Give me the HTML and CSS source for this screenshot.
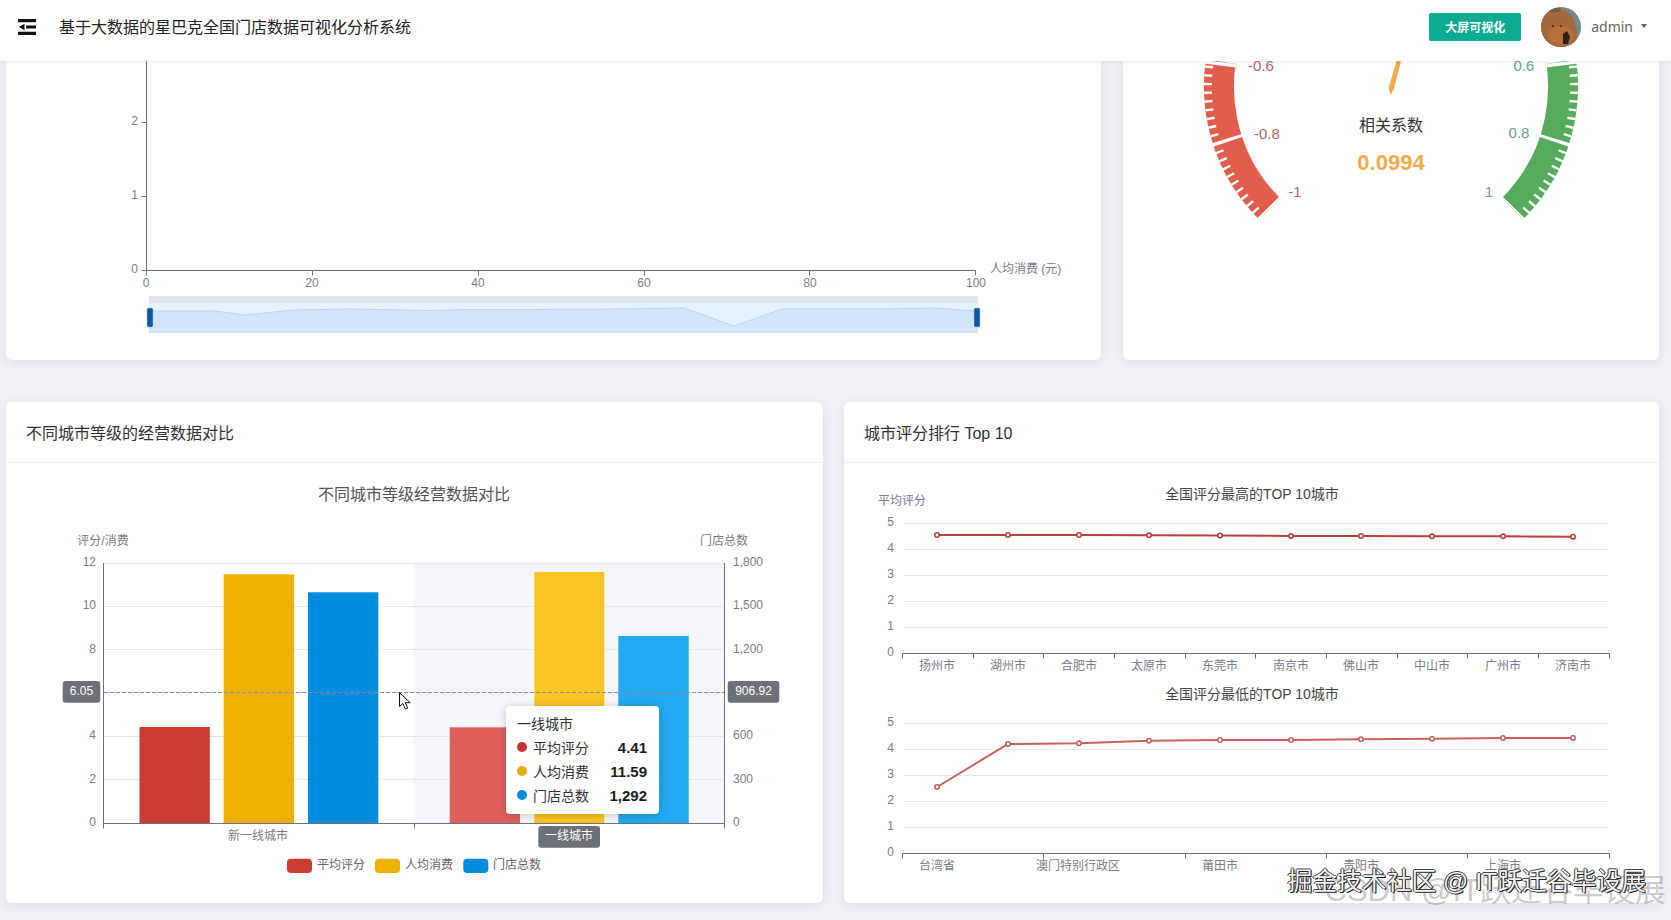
FILE: index.html
```html
<!DOCTYPE html>
<html lang="zh-CN">
<head>
<meta charset="utf-8">
<title>基于大数据的星巴克全国门店数据可视化分析系统</title>
<link rel="stylesheet" href="styles.css">
</head>
<body>
<header class="topbar">
  <svg class="fold" viewBox="0 0 18 16" width="18" height="16"><path d="M0 0h18v3.2H0zM8 6.4h10v3.2H8zM0 12.8h18V16H0zM1 8l5.5-3.2v6.4z"/></svg>
  <h1 class="app-title">基于大数据的星巴克全国门店数据可视化分析系统</h1>
  <div class="topbar-right">
    <a class="screen-btn">大屏可视化</a>
    <svg class="avatar" viewBox="0 0 40 40" width="40" height="40">
      <defs><clipPath id="av"><circle cx="20" cy="20" r="20"/></clipPath></defs>
      <g clip-path="url(#av)">
        <rect width="40" height="40" fill="#76878f"/>
        <path d="M0 40V17C2 7 9 2 17 2c8 0 15 6 17 15l2 8v15z" fill="#a4683c"/>
        <path d="M8 4c3-3 8-4 12-3l-2 4C13 5 10 6 8 4z" fill="#7a5a44"/>
        <ellipse cx="20" cy="28" rx="13" ry="9" fill="#b5703c"/>
        <path d="M22 27l4-3 3 6-2 7h-5z" fill="#2a211c"/>
        <circle cx="12" cy="19" r="1" fill="#3a2618"/><circle cx="20" cy="19" r="1" fill="#3a2618"/>
      </g>
    </svg>
    <span class="user-name">admin</span>
    <i class="caret"></i>
  </div>
</header>

<main class="page">
  <section class="row row-top">
    <div class="card">
      <svg class="fill" viewBox="6 61 1095 299">
        <path class="axis" d="M146.5 61V270.5H976M141.5 122.5h5M141.5 196.5h5M141.5 270.5h5M146.5 270.5v5M312.5 270.5v5M478.5 270.5v5M644.5 270.5v5M809.5 270.5v5M975.5 270.5v5"/>
        <g class="ax end">
          <text x="138" y="121">2</text><text x="138" y="195">1</text><text x="138" y="269">0</text>
        </g>
        <g class="ax mid">
          <text x="146" y="283">0</text><text x="312" y="283">20</text><text x="478" y="283">40</text><text x="644" y="283">60</text><text x="810" y="283">80</text><text x="976" y="283">100</text>
        </g>
        <text class="ax" x="990" y="269">人均消费 (元)</text>
        <rect x="149" y="296" width="829" height="37" fill="#d2e6fa"/>
        <rect x="149" y="296" width="829" height="7" fill="#e0e4ec"/>
        <path fill="#e4f3fe" d="M149 303H978V311L975 311 935 308 880 309 782 309 734 326 684 308 620 309 530 309.5 470 309.5 430 310.5 350 309 293 310 246 315 214 311 149 311Z"/>
        <path fill="none" stroke="#bcd4f0" d="M149 311L214 311 246 315 293 310 350 309 430 310.5 470 309.5 530 309.5 620 309 684 308 734 326 782 309 880 309 935 308 975 311"/>
        <rect class="zh" x="147" y="308" width="6" height="19" rx="1.5"/>
        <rect class="zh" x="974" y="308" width="6" height="19" rx="1.5"/>
      </svg>
    </div>
    <div class="card">
      <svg class="fill" viewBox="1123 61 536 299">
        <path class="arc red" d="M1269.4 208.6A172 172 0 0 1 1232.1 21.2"/>
        <path class="arc green" d="M1512.6 208.6A172 172 0 0 0 1549.9 21.2"/>
        <path class="minor" pathLength="25" d="M1261.6 216.4A183 183 0 0 1 1221.9 16.9"/>
        <path class="minor" pathLength="25" d="M1520.4 216.4A183 183 0 0 0 1560.1 16.9"/>
        <path class="major" pathLength="2.5" d="M1269.4 208.6A172 172 0 0 1 1232.1 21.2"/>
        <path class="major" pathLength="2.5" d="M1512.6 208.6A172 172 0 0 0 1549.9 21.2"/>
        <path class="cap" d="M1202 61.5L1238 66M1580 61.5L1544 66"/>
        <polygon fill="#f0ad4e" points="1396.5,61 1401,61 1394,89 1390.6,95 1388.5,88"/>
        <g class="gl gl-r">
          <text x="1295" y="191">-1</text><text x="1267" y="133">-0.8</text><text x="1261" y="65">-0.6</text>
        </g>
        <g class="gl gl-g">
          <text x="1489" y="191">1</text><text x="1519" y="132">0.8</text><text x="1524" y="65">0.6</text>
        </g>
        <text class="g-name" x="1391" y="125">相关系数</text>
        <text class="g-val" x="1391" y="162">0.0994</text>
      </svg>
    </div>
  </section>

  <section class="row row-bottom">
    <div class="card card-col">
      <div class="card-head">不同城市等级的经营数据对比</div>
      <div class="card-body">
        <svg class="fill" viewBox="6 463 817 440">
          <text class="c-title" x="414" y="494">不同城市等级经营数据对比</text>
          <rect x="414" y="563" width="310" height="260" fill="#f5f7fb"/>
          <path class="split" d="M104 563.5H724M104 606.5H724M104 649.5H724M104 692.5H724M104 736.5H724M104 779.5H724"/>
          <rect x="139.5" y="727" width="70.3" height="96" fill="#cb3c32"/>
          <rect x="223.7" y="574.3" width="70.3" height="248.7" fill="#ebb000"/>
          <rect x="308" y="592.3" width="70.3" height="230.7" fill="#008bdc"/>
          <rect x="449.7" y="727.3" width="70.3" height="95.7" fill="#df605b"/>
          <rect x="534.3" y="572" width="70" height="251" fill="#fcc425"/>
          <rect x="618.3" y="636" width="70.4" height="187" fill="#22a9f1"/>
          <path class="axis" d="M103.5 563V823.5H724.5V563M103.5 823.5v5M414.5 823.5v5M724.5 823.5v5"/>
          <path class="cross" d="M104 692.5H724"/>
          <g class="ax mid">
            <text x="103" y="541">评分/消费</text><text x="724" y="541">门店总数</text>
            <text x="258" y="836">新一线城市</text>
          </g>
          <g class="ax end">
            <text x="96" y="562">12</text><text x="96" y="605">10</text><text x="96" y="649">8</text><text x="96" y="735">4</text><text x="96" y="779">2</text><text x="96" y="822">0</text>
          </g>
          <g class="ax">
            <text x="733" y="562">1,800</text><text x="733" y="605">1,500</text><text x="733" y="649">1,200</text><text x="733" y="735">600</text><text x="733" y="779">300</text><text x="733" y="822">0</text>
          </g>
          <rect class="pl" x="62.7" y="681" width="37.6" height="21.7" rx="3"/>
          <rect class="pl" x="727.7" y="681" width="51.6" height="21.7" rx="3"/>
          <rect class="pl" x="538.3" y="826" width="61.7" height="21.7" rx="3"/>
          <g class="pl-t">
            <text x="81.5" y="691">6.05</text><text x="753.5" y="691">906.92</text><text x="569" y="835.5">一线城市</text>
          </g>
          <rect x="287" y="858.7" width="25" height="14.3" rx="4" fill="#cb3c32"/>
          <rect x="375" y="858.7" width="25" height="14.3" rx="4" fill="#ebb000"/>
          <rect x="463.3" y="858.7" width="25" height="14.3" rx="4" fill="#008bdc"/>
          <g class="ax lg">
            <text x="317" y="865">平均评分</text><text x="405" y="865">人均消费</text><text x="493" y="865">门店总数</text>
          </g>
          <path d="M399.5 692.5v14l3.4-3 2.4 5.6 2.4-1-2.4-5.4h4.8z" fill="#fff" stroke="#111" stroke-width="1"/>
        </svg>
        <div class="tip">
          <div class="tip-title">一线城市</div>
          <div class="tip-row"><i class="dot dot-r"></i><span>平均评分</span><b>4.41</b></div>
          <div class="tip-row"><i class="dot dot-y"></i><span>人均消费</span><b>11.59</b></div>
          <div class="tip-row"><i class="dot dot-b"></i><span>门店总数</span><b>1,292</b></div>
        </div>
      </div>
    </div>
    <div class="card card-col">
      <div class="card-head">城市评分排行 Top 10</div>
      <div class="card-body">
        <svg class="fill" viewBox="844 463 815 440">
          <text class="s-title" x="1252" y="494">全国评分最高的TOP 10城市</text>
          <text class="ax mid" x="902" y="501">平均评分</text>
          <path class="split" d="M903 523.5H1608M903 549.5H1608M903 575.5H1608M903 601.5H1608M903 627.5H1608"/>
          <path class="axis" d="M902.5 653.5H1609.5M902.5 653.5v5M973.5 653.5v5M1043.5 653.5v5M1114.5 653.5v5M1185.5 653.5v5M1255.5 653.5v5M1326.5 653.5v5M1397.5 653.5v5M1467.5 653.5v5M1538.5 653.5v5M1609.5 653.5v5"/>
          <g class="ax end">
            <text x="894" y="522">5</text><text x="894" y="548">4</text><text x="894" y="574">3</text><text x="894" y="600">2</text><text x="894" y="626">1</text><text x="894" y="652">0</text>
          </g>
          <g class="ax mid">
            <text x="937" y="666">扬州市</text><text x="1008" y="666">湖州市</text><text x="1079" y="666">合肥市</text><text x="1149" y="666">太原市</text><text x="1220" y="666">东莞市</text><text x="1291" y="666">南京市</text><text x="1361" y="666">佛山市</text><text x="1432" y="666">中山市</text><text x="1503" y="666">广州市</text><text x="1573" y="666">济南市</text>
          </g>
          <polyline class="ln ln-1" points="937,535 1008,535 1079,535 1149,535.3 1220,535.5 1291,536 1361,536 1432,536.3 1503,536.3 1573,536.7"/>
          <g class="pt pt-1">
            <circle cx="937" cy="535" r="2.2"/><circle cx="1008" cy="535" r="2.2"/><circle cx="1079" cy="535" r="2.2"/><circle cx="1149" cy="535.3" r="2.2"/><circle cx="1220" cy="535.5" r="2.2"/><circle cx="1291" cy="536" r="2.2"/><circle cx="1361" cy="536" r="2.2"/><circle cx="1432" cy="536.3" r="2.2"/><circle cx="1503" cy="536.3" r="2.2"/><circle cx="1573" cy="536.7" r="2.2"/>
          </g>

          <text class="s-title" x="1252" y="694">全国评分最低的TOP 10城市</text>
          <path class="split" d="M903 723.5H1608M903 749.5H1608M903 775.5H1608M903 801.5H1608M903 827.5H1608"/>
          <path class="axis" d="M902.5 853.5H1609.5M902.5 853.5v5M1043.5 853.5v5M1185.5 853.5v5M1326.5 853.5v5M1467.5 853.5v5M1609.5 853.5v5"/>
          <g class="ax end">
            <text x="894" y="722">5</text><text x="894" y="748">4</text><text x="894" y="774">3</text><text x="894" y="800">2</text><text x="894" y="826">1</text><text x="894" y="852">0</text>
          </g>
          <g class="ax mid">
            <text x="937" y="866">台湾省</text><text x="1078" y="866">澳门特别行政区</text><text x="1220" y="866">莆田市</text><text x="1361" y="866">贵阳市</text><text x="1503" y="866">上海市</text>
          </g>
          <polyline class="ln ln-2" points="937,787 1008,744 1079,743.3 1149,740.7 1220,740 1291,740 1361,739.3 1432,738.7 1503,738 1573,738"/>
          <g class="pt pt-2">
            <circle cx="937" cy="787" r="2.2"/><circle cx="1008" cy="744" r="2.2"/><circle cx="1079" cy="743.3" r="2.2"/><circle cx="1149" cy="740.7" r="2.2"/><circle cx="1220" cy="740" r="2.2"/><circle cx="1291" cy="740" r="2.2"/><circle cx="1361" cy="739.3" r="2.2"/><circle cx="1432" cy="738.7" r="2.2"/><circle cx="1503" cy="738" r="2.2"/><circle cx="1573" cy="738" r="2.2"/>
          </g>
        </svg>
      </div>
    </div>
  </section>
</main>

<div class="wm wm-csdn">CSDN @IT跃迁谷毕设展</div>
<div class="wm wm-juejin">掘金技术社区 @ IT跃迁谷毕设展</div>
</body>
</html>
```
FILE: styles.css
```css
* { box-sizing: border-box; }
html, body { margin: 0; height: 100%; }
body {
  width: 1671px;
  height: 920px;
  overflow: hidden;
  position: relative;
  background: #eff1f5;
  font-family: "Liberation Sans", "Noto Sans CJK SC", sans-serif;
  color: #303133;
}

.topbar {
  height: 61px;
  background: #fff;
  display: flex;
  align-items: center;
  padding: 0 24px 7px 18px;
  position: relative;
  z-index: 2;
  box-shadow: 0 1px 4px rgba(0, 0, 0, .08);
}
.fold { fill: #111; flex: none; }
.app-title {
  margin: 0 0 2px 23px;
  font-size: 16px;
  font-weight: 400;
  color: #222;
}
.topbar-right { margin-left: auto; display: flex; align-items: center; }
.screen-btn {
  width: 92px;
  height: 28px;
  padding-bottom: 2px;
  border-radius: 2px;
  background: #0bab91;
  color: #fff;
  font-size: 12px;
  font-weight: 700;
  display: flex;
  align-items: center;
  justify-content: center;
  margin-right: 20px;
}
.avatar { flex: none; margin-right: 10px; }
.user-name { font-family: "Noto Sans", sans-serif; font-size: 14px; color: #666; margin-bottom: 2px; }
.caret {
  margin: 0 0 2px 8px;
  border-left: 3.5px solid transparent;
  border-right: 3.5px solid transparent;
  border-top: 4px solid #666;
}

.page { padding: 0 12px 0 6px; }
.row { display: grid; }
.row-top { grid-template-columns: 1095px 536px; gap: 22px; height: 299px; margin-bottom: 42px; }
.row-bottom { grid-template-columns: 817px 815px; gap: 21px; height: 501px; }
.card {
  background: #fff;
  border-radius: 6px;
  box-shadow: 0 2px 12px rgba(0, 0, 0, .08);
  overflow: hidden;
  min-width: 0;
}
.row-top .card { border-radius: 0 0 6px 6px; }
.card-col { display: flex; flex-direction: column; }
.card-head {
  height: 61px;
  flex: none;
  padding: 0 20px;
  display: flex;
  align-items: center;
  font-size: 16px;
  color: #303133;
  border-bottom: 1px solid #ebeef5;
}
.card-body { flex: 1; position: relative; min-height: 0; }
.fill { display: block; width: 100%; height: 100%; }

text { font-family: "Liberation Sans", "Noto Sans CJK SC", sans-serif; dominant-baseline: central; }
.axis { fill: none; stroke: #6e7079; stroke-width: 1; }
.split { fill: none; stroke: #e2e6ee; stroke-width: 1; }
.cross { fill: none; stroke: #8a8d95; stroke-width: 1; stroke-dasharray: 4 2; }
.ax { font-size: 12px; fill: #7b7d85; }
.end { text-anchor: end; }
.mid { text-anchor: middle; }
.lg { fill: #666; }
.zh { fill: #0a57a6; stroke: #a9c6e6; stroke-width: .5; }

.arc, .major, .minor, .cap { fill: none; }
.arc { stroke-width: 30; }
.red { stroke: #e15e4c; }
.green { stroke: #56ab5c; }
.minor { stroke: #fff; stroke-width: 8; stroke-dasharray: .28 .72; stroke-dashoffset: .14; }
.major { stroke: #fff; stroke-width: 31; stroke-dasharray: .04 .96; stroke-dashoffset: .02; }
.cap { stroke: #fff; stroke-width: 3.5; }
.gl { font-size: 15px; text-anchor: middle; }
.gl-r { fill: #c0625f; }
.gl-g { fill: #6fa183; }
.g-name { font-size: 16px; fill: #333; text-anchor: middle; }
.g-val { font-size: 22px; font-weight: 700; fill: #f0ad4e; text-anchor: middle; }

.c-title { font-size: 16px; fill: #555; text-anchor: middle; }
.s-title { font-size: 14px; fill: #444; text-anchor: middle; }
.pl { fill: #6e7079; }
.pl-t { font-size: 12px; fill: #fff; text-anchor: middle; }

.ln { fill: none; stroke-width: 2; }
.ln-1 { stroke: #bb3f3a; }
.ln-2 { stroke: #c9615a; }
.pt { fill: #fff; stroke-width: 1.6; }
.pt-1 { stroke: #bb3f3a; }
.pt-2 { stroke: #c9615a; }

.tip {
  position: absolute;
  left: 500px;
  top: 243px;
  width: 153px;
  height: 108px;
  padding: 8px 12px 0 11px;
  background: #fff;
  border-radius: 4px;
  box-shadow: 0 1px 10px rgba(0, 0, 0, .2);
  font-size: 14px;
  color: #333;
}
.tip-title { height: 20px; line-height: 20px; margin-bottom: 1px; }
.tip-row { height: 24px; display: flex; align-items: center; }
.tip-row span { margin-left: 6px; }
.tip-row b { margin-left: auto; font-size: 15px; color: #1d1d1d; }
.dot { width: 10px; height: 10px; border-radius: 50%; flex: none; }
.dot-r { background: #c23531; }
.dot-y { background: #e6ae0a; }
.dot-b { background: #0a8ad8; }

.wm { position: absolute; white-space: nowrap; z-index: 3; }
.wm-csdn { right: 5px; top: 865px; font-size: 31px; color: rgba(120, 120, 125, .4); }
.wm-juejin {
  right: 25px;
  top: 861px;
  font-size: 24.8px;
  color: #f4f4f4;
  text-shadow: 1px 1px 0 #222, -1px 0 0 #333, 0 -1px 0 #444, 1px 0 0 #333;
}
```
